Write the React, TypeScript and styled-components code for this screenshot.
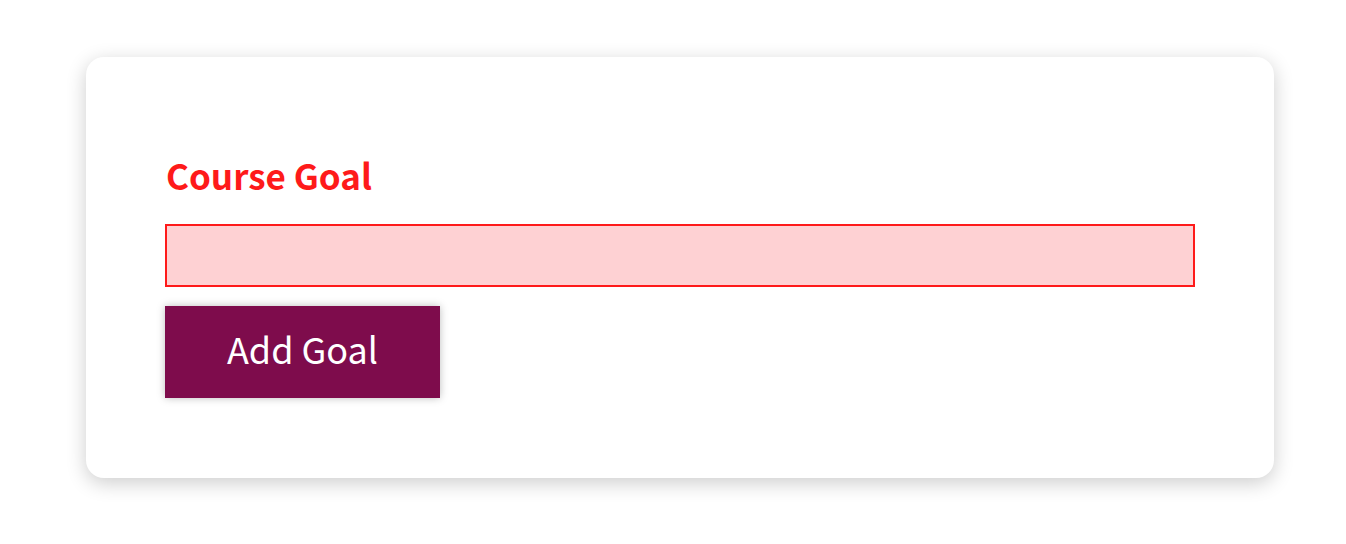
import styled, { createGlobalStyle } from "styled-components";

const GlobalStyle = createGlobalStyle`
  * {
    box-sizing: border-box;
  }
  body {
    margin: 0;
    background: #ffffff;
    font-family: "Noto Sans CJK KR", "Noto Sans", sans-serif;
  }
`;

const Page = styled.main`
  padding: 57px 72px 66px 86px;
`;

const Card = styled.form`
  background: #ffffff;
  border-radius: 18px;
  box-shadow: 0 5px 20px rgba(0, 0, 0, 0.2);
  padding: 80px 79px 80px 79px;
`;

const FormControl = styled.div<{ invalid: boolean }>`
  display: flex;
  flex-direction: column;
  margin-bottom: 19px;

  label {
    font-size: 35px;
    font-weight: 700;
    line-height: 58px;
    margin-top: 9px;
    margin-bottom: 20px;
    padding-left: 1px;
    color: ${(p) => (p.invalid ? "#fe1a1a" : "#000")};
  }

  input {
    display: block;
    width: 100%;
    height: 63px;
    font: inherit;
    border: 2px solid ${(p) => (p.invalid ? "#fe1a1a" : "#ccc")};
    background: ${(p) => (p.invalid ? "#fed1d3" : "#fff")};
    outline: none;
  }
`;

const Button = styled.button`
  width: 275px;
  height: 92px;
  padding: 0 0 8px;
  font-family: inherit;
  font-size: 36px;
  color: #ffffff;
  background: #7e0c4c;
  border: none;
  box-shadow: 0 0 8px rgba(0, 0, 0, 0.26);
  cursor: pointer;
`;

export default function App() {
  return (
    <>
      <GlobalStyle />
      <Page>
        <Card onSubmit={(e) => e.preventDefault()}>
          <FormControl invalid>
            <label>Course Goal</label>
            <input type="text" />
          </FormControl>
          <Button type="submit">Add Goal</Button>
        </Card>
      </Page>
    </>
  );
}
